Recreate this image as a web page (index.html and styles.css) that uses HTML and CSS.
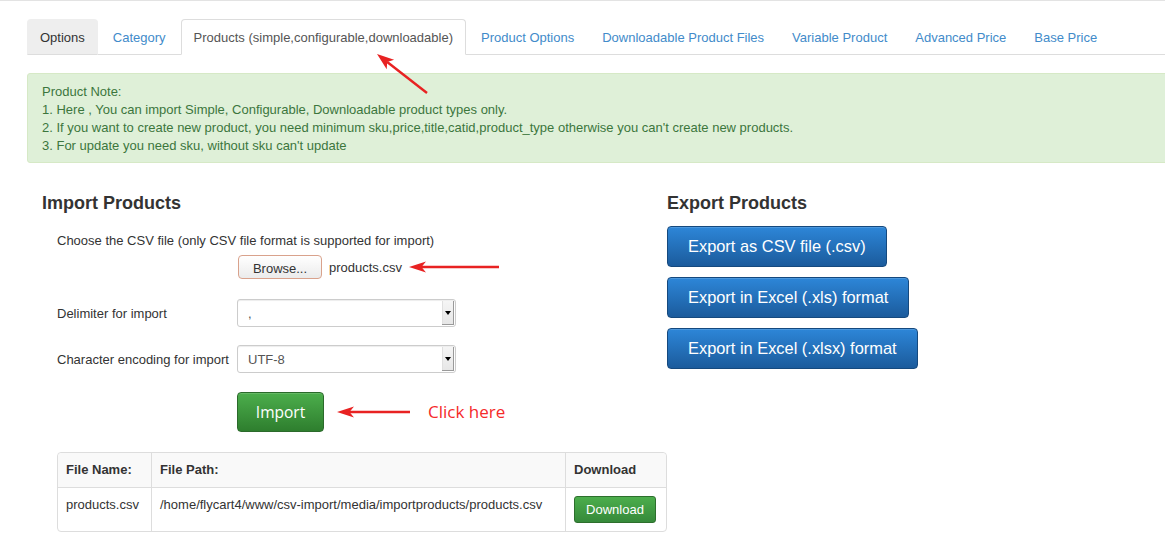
FILE: index.html
```html
<!DOCTYPE html>
<html>
<head>
<meta charset="utf-8">
<title>Import Products</title>
<link rel="stylesheet" href="styles.css">
</head>
<body>
<div class="page">
  <ul class="tabs">
    <li><a class="tab tab-hover">Options</a></li>
    <li><a class="tab">Category</a></li>
    <li><a class="tab tab-active">Products (simple,configurable,downloadable)</a></li>
    <li><a class="tab">Product Options</a></li>
    <li><a class="tab">Downloadable Product Files</a></li>
    <li><a class="tab">Variable Product</a></li>
    <li><a class="tab">Advanced Price</a></li>
    <li><a class="tab">Base Price</a></li>
  </ul>

  <div class="alert">
    <div>Product Note:</div>
    <div>1. Here , You can import Simple, Configurable, Downloadable product types only.</div>
    <div>2. If you want to create new product, you need minimum sku,price,title,catid,product_type otherwise you can't create new products.</div>
    <div>3. For update you need sku, without sku can't update</div>
  </div>

  <div class="row">
    <div class="col">
      <h3 class="heading">Import Products</h3>
      <div class="form">
        <div class="file-label">Choose the CSV file (only CSV file format is supported for import)</div>
        <div class="file-row">
          <span class="browse">Browse...</span>
          <span class="file-name">products.csv</span>
          <svg class="harrow" width="92" height="14" viewBox="0 0 92 14">
            <line x1="11" y1="7" x2="90" y2="7" stroke="#e82222" stroke-width="2.4"/>
            <polygon points="0,7 17,1.5 12.5,7 17,12.5" fill="#e82222"/>
          </svg>
        </div>
        <div class="field-row first">
          <span class="field-label">Delimiter for import</span>
          <div class="select"><span class="select-value">,</span><span class="select-btn"><span class="caret"></span></span></div>
        </div>
        <div class="field-row second">
          <span class="field-label">Character encoding for import</span>
          <div class="select"><span class="select-value">UTF-8</span><span class="select-btn"><span class="caret"></span></span></div>
        </div>
        <div class="import-row">
          <span class="btn-import">Import</span>
          <svg class="harrow2" width="74" height="14" viewBox="0 0 74 14">
            <line x1="11" y1="7" x2="73" y2="7" stroke="#e82222" stroke-width="2.4"/>
            <polygon points="0,7 17,1.5 12.5,7 17,12.5" fill="#e82222"/>
          </svg>
          <span class="click-here">Click here</span>
        </div>
        <table class="files">
          <thead>
            <tr><th class="c1">File Name:</th><th class="c2">File Path:</th><th class="c3">Download</th></tr>
          </thead>
          <tbody>
            <tr>
              <td class="c1">products.csv</td>
              <td class="c2">/home/flycart4/www/csv-import/media/importproducts/products.csv</td>
              <td class="c3"><span class="btn-download">Download</span></td>
            </tr>
          </tbody>
        </table>
      </div>
    </div>
    <div class="col">
      <h3 class="heading">Export Products</h3>
      <div class="exports">
        <span class="btn-export">Export as CSV file (.csv)</span>
        <span class="btn-export">Export in Excel (.xls) format</span>
        <span class="btn-export">Export in Excel (.xlsx) format</span>
      </div>
    </div>
  </div>

  <svg class="darrow" width="65" height="55" viewBox="0 0 65 55">
    <line x1="17.2" y1="16" x2="57" y2="47" stroke="#e82222" stroke-width="2.4"/>
    <polygon points="7,8 24.1,13.8 17.2,16 16.7,23.2" fill="#e82222"/>
  </svg>
</div>
</body>
</html>
```

FILE: styles.css
```css
html, body {
  margin: 0;
  padding: 0;
  overflow: hidden;
  background: #fff;
}
body {
  font-family: "Liberation Sans", Arial, sans-serif;
  font-size: 13px;
  line-height: 18px;
  color: #333;
  width: 1165px;
  height: 548px;
}
.page {
  position: relative;
  border-top: 1px solid #e3e3e3;
  padding: 18px 0 0 27px;
  width: 1250px;
}
.tabs {
  list-style: none;
  margin: 0;
  padding: 0;
  display: flex;
  border-bottom: 1px solid #ddd;
}
.tabs li {
  margin-bottom: -1px;
}
.tab {
  display: block;
  margin-right: 2px;
  padding: 9px 12px 7px;
  border: 1px solid transparent;
  border-radius: 4px 4px 0 0;
  color: #428bca;
  line-height: 18px;
  white-space: nowrap;
}
.tab-hover {
  background: #eee;
  border-color: #eee #eee #ddd;
  color: #333;
}
.tab-active {
  background: #fff;
  border-color: #ddd #ddd transparent;
  color: #555;
}
.alert {
  margin-top: 18px;
  padding: 9px 14px 7px;
  background: #dff0d8;
  border: 1px solid #d6e9c6;
  border-radius: 3px;
  color: #3c763d;
  line-height: 18px;
}
.row {
  display: flex;
}
.col {
  width: 625px;
  padding-left: 15px;
  box-sizing: border-box;
}
.heading {
  margin: 30px 0 0;
  font-size: 18px;
  line-height: 20px;
  font-weight: bold;
  color: #333;
}
.form {
  padding-left: 15px;
}
.file-label {
  margin-top: 19px;
}
.file-row {
  display: flex;
  align-items: center;
  margin-top: 5px;
  padding-left: 181px;
}
.browse {
  box-sizing: border-box;
  width: 84px;
  height: 24px;
  line-height: 23px;
  padding-top: 1px;
  text-align: center;
  border: 1px solid #d9a28c;
  border-radius: 4px;
  background: linear-gradient(#ffffff, #ebebeb);
  color: #333;
}
.file-name {
  margin-left: 7px;
  padding-top: 1px;
}
.harrow {
  margin-left: 7px;
}
.field-row {
  display: flex;
  align-items: center;
}
.field-row.first {
  margin-top: 20px;
}
.field-row.second {
  margin-top: 18px;
}
.field-label {
  width: 180px;
  padding-top: 2px;
}
.select {
  box-sizing: border-box;
  width: 219px;
  height: 28px;
  display: flex;
  border: 1px solid #ccc;
  border-radius: 3px;
  background: #fff;
  box-shadow: inset 0 1px 1px rgba(0,0,0,0.075);
}
.select-value {
  flex: 1;
  padding-left: 10px;
  padding-top: 1px;
  line-height: 26px;
  color: #555;
}
.select-btn {
  width: 12px;
  margin: 1px 1px 1px 0;
  background: linear-gradient(#f5f5f5, #e6e6e6);
  box-shadow: inset -1px -1px 0 #9a9a9a, inset 1px 0 0 #e0e0e0;
  display: flex;
  align-items: center;
  justify-content: center;
}
.caret {
  width: 0;
  height: 0;
  border-left: 3px solid transparent;
  border-right: 3px solid transparent;
  border-top: 4px solid #000;
}
.import-row {
  display: flex;
  align-items: center;
  margin-top: 19px;
  padding-left: 180px;
}
.btn-import {
  box-sizing: border-box;
  width: 87px;
  height: 40px;
  line-height: 38px;
  text-align: center;
  font-family: "Open Sans", "DejaVu Sans", sans-serif;
  font-size: 15.5px;
  color: #fff;
  border: 1px solid #2b6a2b;
  border-radius: 4px;
  background: linear-gradient(#4cae4c, #2e7e2e);
  box-shadow: inset 0 1px 0 rgba(255,255,255,0.15);
}
.harrow2 {
  margin-left: 13px;
}
.click-here {
  margin-left: 17px;
  font-family: "Open Sans", "DejaVu Sans", sans-serif;
  font-size: 17px;
  color: #f52a2a;
}
.files {
  margin-top: 20px;
  width: 610px;
  border-collapse: separate;
  border-spacing: 0;
  border: 1px solid #ddd;
  border-radius: 4px;
}
.files th, .files td {
  padding: 8px;
  text-align: left;
  vertical-align: top;
  line-height: 18px;
}
.files th {
  background: #f9f9f9;
  font-weight: bold;
  border-bottom: 1px solid #ddd;
}
.files th.c1 { border-top-left-radius: 4px; }
.files th.c3 { border-top-right-radius: 4px; }
.files .c1 { width: 77px; }
.files .c2 { width: 397px; border-left: 1px solid #ddd; }
.files .c3 { border-left: 1px solid #ddd; }
.btn-download {
  display: inline-block;
  box-sizing: border-box;
  width: 82px;
  height: 27px;
  line-height: 25px;
  text-align: center;
  color: #fff;
  border: 1px solid #2d6f2d;
  border-radius: 3px;
  background: linear-gradient(#4cae4c, #36893a);
}
.exports {
  margin-top: 13px;
  display: flex;
  flex-direction: column;
  align-items: flex-start;
  gap: 10px;
}
.btn-export {
  box-sizing: border-box;
  height: 41px;
  line-height: 39px;
  padding: 0 20px;
  font-size: 16.4px;
  color: #fff;
  border: 1px solid #15497e;
  border-radius: 4px;
  background: linear-gradient(#2d86d8, #1b5b9c);
  box-shadow: inset 0 1px 0 rgba(255,255,255,0.15);
}
.darrow {
  position: absolute;
  left: 370px;
  top: 45px;
  pointer-events: none;
}
```
